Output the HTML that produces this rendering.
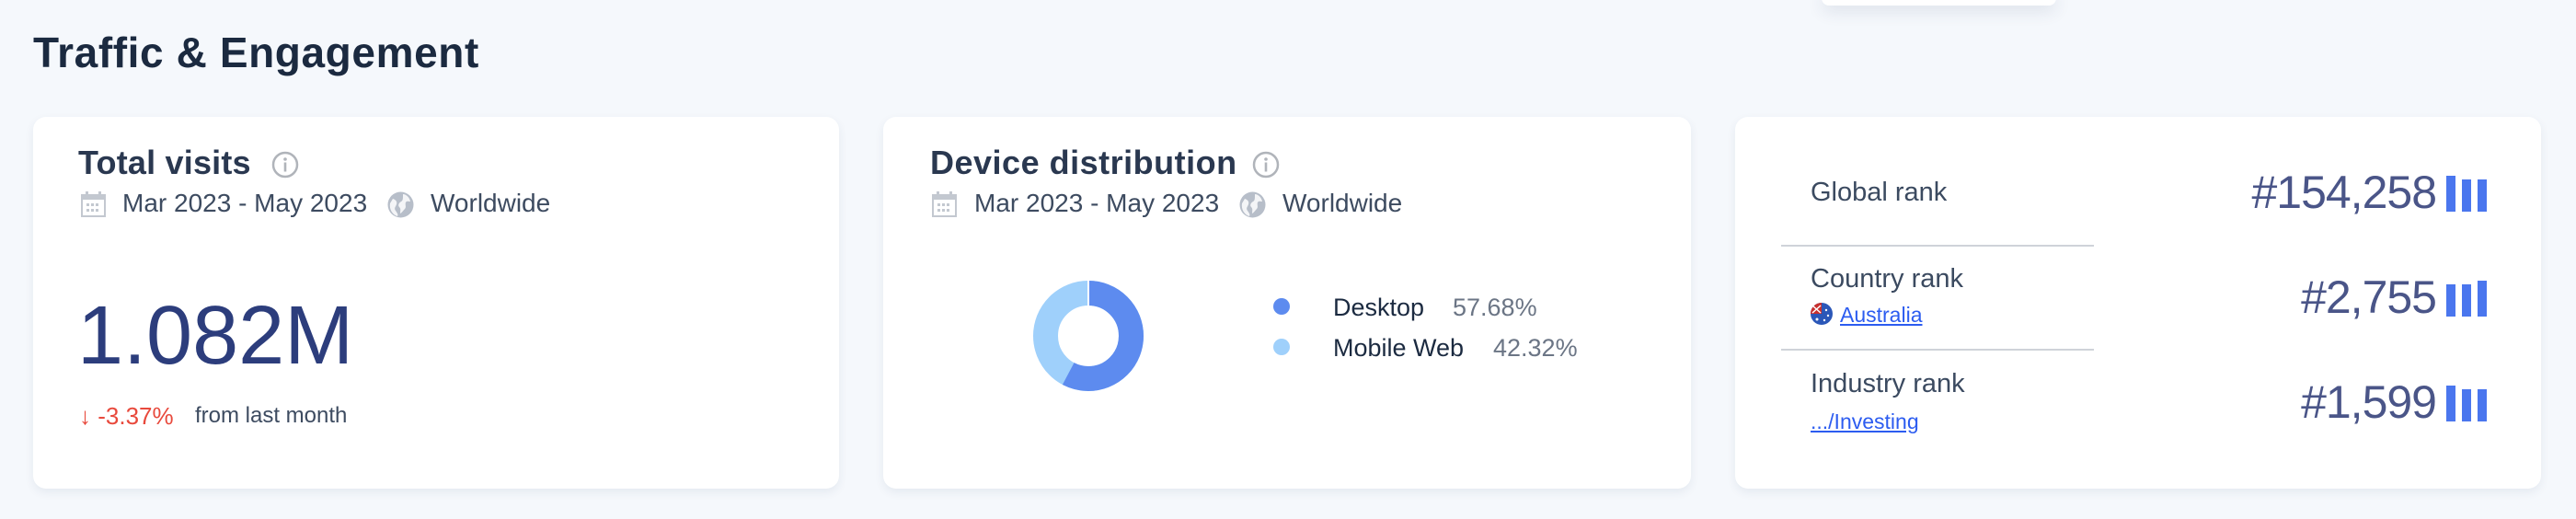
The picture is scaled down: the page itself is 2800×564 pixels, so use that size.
<!DOCTYPE html>
<html><head><meta charset="utf-8"><style>
*{margin:0;padding:0;box-sizing:border-box}
body{width:2800px;height:564px;background:#f5f8fc;font-family:"Liberation Sans",sans-serif;position:relative;overflow:hidden;color:#2b3a4f}
.a{position:absolute;white-space:nowrap}
.card{position:absolute;top:127px;height:404px;background:#fff;border-radius:14px;box-shadow:0 4px 10px rgba(40,60,100,.08)}
.h{font-size:36px;font-weight:bold;color:#2a3850;letter-spacing:0.2px}
.sub{font-size:28px;color:#3d4b60}
.bars{position:absolute;width:46px;height:40px}
.bars i{position:absolute;bottom:0;width:10px;background:#4a76ee}
.rl{font-size:29px;color:#3b4a60}
.rn{font-size:50px;color:#4a5588;font-weight:normal;letter-spacing:-1px;text-align:right}
.lk{font-size:22px;color:#2c5cf0;text-decoration:underline}
</style></head><body>
<div class="a" style="left:1980px;top:-10px;width:255px;height:16px;background:#fff;border-radius:8px;box-shadow:0 6px 18px rgba(40,60,100,.12)"></div>
<div class="a" style="left:36px;top:30px;font-size:46px;font-weight:600;color:#1b2a40;letter-spacing:0.6px">Traffic &amp; Engagement</div>

<!-- card 1 -->
<div class="card" style="left:36px;width:876px"></div>
<div class="a h" style="left:85px;top:156px">Total visits</div>
<svg class="a" style="left:295px;top:164px" width="30" height="30" viewBox="0 0 30 30"><circle cx="15" cy="15" r="13" fill="none" stroke="#b0b4ba" stroke-width="2.5"/><circle cx="15" cy="9" r="1.8" fill="#b0b4ba"/><rect x="13.7" y="12.5" width="2.6" height="10" fill="#b0b4ba"/></svg>
<svg class="a" style="left:88px;top:208px" width="27" height="28" viewBox="0 0 27 28"><rect x="1" y="4" width="25" height="23" fill="none" stroke="#c3c8d0" stroke-width="2"/><rect x="1" y="4" width="25" height="5" fill="#c3c8d0"/><rect x="5" y="0" width="3" height="6" fill="#c3c8d0"/><rect x="19" y="0" width="3" height="6" fill="#c3c8d0"/><g fill="#c3c8d0"><rect x="6" y="13" width="3" height="3"/><rect x="11" y="13" width="3" height="3"/><rect x="16" y="13" width="3" height="3"/><rect x="6" y="19" width="3" height="3"/><rect x="11" y="19" width="3" height="3"/><rect x="16" y="19" width="3" height="3"/></g></svg>
<div class="a sub" style="left:133px;top:205px">Mar 2023 - May 2023</div>
<svg class="a" style="left:421px;top:208px" width="29" height="29" viewBox="0 0 29 29"><circle cx="14.5" cy="14.5" r="14" fill="#b7bec9"/><path d="M6 8c3 1 5 3 4 6s-3 4-1 7 3 4 2 6C5 25 2 19 3 13z M17 3c3 0 7 3 8 8-2 0-4-1-5 1s1 5-1 7-3 4-5 5c0-3 1-5-1-7s0-5 2-6 2-3 2-8z" fill="#fff" opacity=".85"/></svg>
<div class="a sub" style="left:468px;top:205px">Worldwide</div>
<div class="a" style="left:84px;top:314px;font-size:90px;color:#2c3d7c;letter-spacing:0px">1.082M</div>
<div class="a" style="left:86px;top:437px;font-size:26px;color:#e8493c">↓ -3.37%</div>
<div class="a" style="left:212px;top:438px;font-size:24px;color:#3d4b60">from last month</div>

<!-- card 2 -->
<div class="card" style="left:960px;width:878px"></div>
<div class="a h" style="left:1011px;top:156px;letter-spacing:0.5px">Device distribution</div>
<svg class="a" style="left:1361px;top:164px" width="30" height="30" viewBox="0 0 30 30"><circle cx="15" cy="15" r="13" fill="none" stroke="#b0b4ba" stroke-width="2.5"/><circle cx="15" cy="9" r="1.8" fill="#b0b4ba"/><rect x="13.7" y="12.5" width="2.6" height="10" fill="#b0b4ba"/></svg>
<svg class="a" style="left:1013px;top:208px" width="27" height="28" viewBox="0 0 27 28"><rect x="1" y="4" width="25" height="23" fill="none" stroke="#c3c8d0" stroke-width="2"/><rect x="1" y="4" width="25" height="5" fill="#c3c8d0"/><rect x="5" y="0" width="3" height="6" fill="#c3c8d0"/><rect x="19" y="0" width="3" height="6" fill="#c3c8d0"/><g fill="#c3c8d0"><rect x="6" y="13" width="3" height="3"/><rect x="11" y="13" width="3" height="3"/><rect x="16" y="13" width="3" height="3"/><rect x="6" y="19" width="3" height="3"/><rect x="11" y="19" width="3" height="3"/><rect x="16" y="19" width="3" height="3"/></g></svg>
<div class="a sub" style="left:1059px;top:205px">Mar 2023 - May 2023</div>
<svg class="a" style="left:1347px;top:208px" width="29" height="29" viewBox="0 0 29 29"><circle cx="14.5" cy="14.5" r="14" fill="#b7bec9"/><path d="M6 8c3 1 5 3 4 6s-3 4-1 7 3 4 2 6C5 25 2 19 3 13z M17 3c3 0 7 3 8 8-2 0-4-1-5 1s1 5-1 7-3 4-5 5c0-3 1-5-1-7s0-5 2-6 2-3 2-8z" fill="#fff" opacity=".85"/></svg>
<div class="a sub" style="left:1394px;top:205px">Worldwide</div>
<svg class="a" style="left:1122px;top:304px" width="122" height="122" viewBox="0 0 122 122">
<circle cx="61" cy="61" r="46.5" fill="none" stroke="#9fd0fb" stroke-width="27"/>
<circle cx="61" cy="61" r="46.5" fill="none" stroke="#5d8bef" stroke-width="27" stroke-dasharray="168.5 400" transform="rotate(-90 61 61)"/>
<line x1="61" y1="0" x2="61" y2="30" stroke="#fff" stroke-width="2"/>
</svg>
<svg class="a" style="left:1383px;top:323px" width="20" height="20"><circle cx="10" cy="10" r="9" fill="#5d8bef"/></svg>
<svg class="a" style="left:1383px;top:367px" width="20" height="20"><circle cx="10" cy="10" r="9" fill="#9fd0fb"/></svg>
<div class="a" style="left:1449px;top:319px;font-size:27px;color:#1b2a40">Desktop</div>
<div class="a" style="left:1579px;top:319px;font-size:27px;color:#6b7585">57.68%</div>
<div class="a" style="left:1449px;top:363px;font-size:27px;color:#1b2a40">Mobile Web</div>
<div class="a" style="left:1623px;top:363px;font-size:27px;color:#6b7585">42.32%</div>

<!-- card 3 -->
<div class="card" style="left:1886px;width:876px"></div>
<div class="a rl" style="left:1968px;top:193px">Global rank</div>
<div class="a rn" style="right:152px;top:180px">#154,258</div>
<div class="bars" style="left:2659px;top:190px"><i style="left:0;height:39px"></i><i style="left:17px;height:35px"></i><i style="left:34px;height:35px"></i></div>
<div class="a" style="left:1936px;top:266px;width:340px;height:2px;background:#cfd3d9"></div>
<div class="a rl" style="left:1968px;top:287px">Country rank</div>
<svg class="a" style="left:1968px;top:329px" width="24" height="24" viewBox="0 0 24 24"><circle cx="12" cy="12" r="12" fill="#2b57b8"/><path d="M12 0A12 12 0 0 0 0 12h12z" fill="#c8302e"/><path d="M2 3l9 8M11 3L2 11" stroke="#fff" stroke-width="1.5"/><circle cx="17" cy="8" r="1.2" fill="#fff"/><circle cx="19" cy="14" r="1.2" fill="#fff"/><circle cx="7" cy="18" r="1.5" fill="#fff"/><circle cx="15" cy="19" r="1.2" fill="#fff"/></svg>
<div class="a lk" style="left:2000px;top:329px;font-size:23px">Australia</div>
<div class="a rn" style="right:152px;top:294px">#2,755</div>
<div class="bars" style="left:2659px;top:304px"><i style="left:0;height:35px"></i><i style="left:17px;height:35px"></i><i style="left:34px;height:39px"></i></div>
<div class="a" style="left:1936px;top:379px;width:340px;height:2px;background:#cfd3d9"></div>
<div class="a rl" style="left:1968px;top:401px">Industry rank</div>
<div class="a lk" style="left:1968px;top:445px;font-size:23px">.../Investing</div>
<div class="a rn" style="right:152px;top:408px">#1,599</div>
<div class="bars" style="left:2659px;top:418px"><i style="left:0;height:39px"></i><i style="left:17px;height:35px"></i><i style="left:34px;height:35px"></i></div>
</body></html>
